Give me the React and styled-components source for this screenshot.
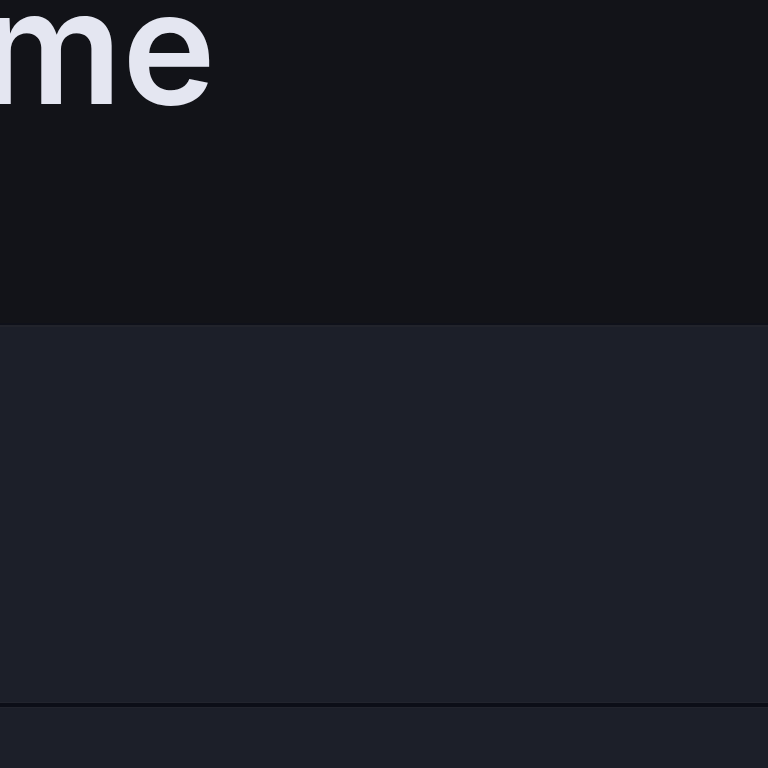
import styled, { createGlobalStyle } from 'styled-components';

const Global = createGlobalStyle`
  html, body { margin: 0; padding: 0; background: #1c1f29; }
  body { overflow: hidden; }
`

const Page = styled.div`
  width: 768px;
  height: 768px;
  display: flex;
  flex-direction: column;
  overflow: hidden;
`

const Header = styled.header`
  height: 323px;
  background: #121318;
  border-bottom: 2px solid #0f111a;
  overflow: hidden;
  display: flex;
  align-items: flex-start;
`

const Title = styled.h1`
  margin: -32px 0 0 -20px;
  font-family: Inter, "Noto Sans", sans-serif;
  font-weight: 600;
  font-size: 158px;
  line-height: 1;
  color: #e4e6f1;
  white-space: nowrap;
`

const Section = styled.section`
  height: 375px;
  background: #1c1f29;
  border-top: 2px solid #21232b;
`

const Divider = styled.div`
  height: 4px;
  background: #0c0e17;
  border-top: 1px solid #22242d;
  border-bottom: 1px solid #22242d;
`

const Footer = styled.div`
  flex: 1;
  background: #1c1f29;
`

export default function App() {
  return (
    <Page>
      <Global />
      <Header>
        <Title>me</Title>
      </Header>
      <Section />
      <Divider />
      <Footer />
    </Page>
  );
}
